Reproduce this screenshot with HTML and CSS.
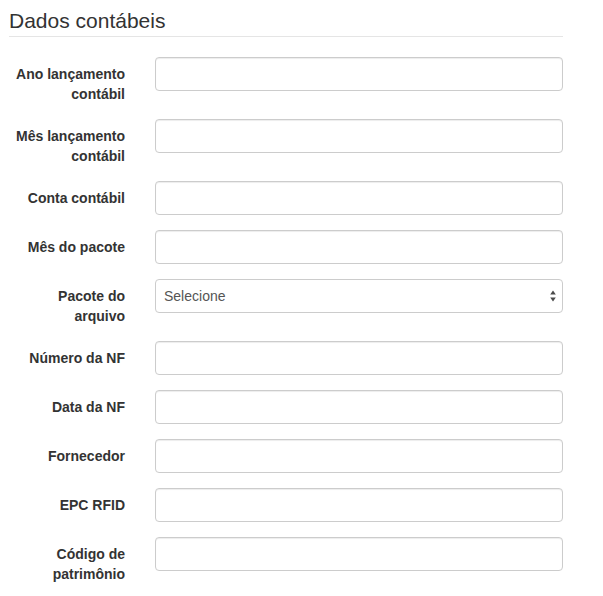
FILE: index.html
```html
<!DOCTYPE html>
<html lang="pt-BR">
<head>
<meta charset="utf-8">
<title>Dados contábeis</title>
<link rel="stylesheet" href="styles.css">
</head>
<body>
<form class="form">
  <fieldset class="fieldset">
    <legend class="legend">Dados contábeis</legend>
    <div class="group">
      <label class="label" for="f1">Ano lançamento contábil</label>
      <div class="field"><input class="control" id="f1" type="text"></div>
    </div>
    <div class="group">
      <label class="label" for="f2">Mês lançamento contábil</label>
      <div class="field"><input class="control" id="f2" type="text"></div>
    </div>
    <div class="group">
      <label class="label" for="f3">Conta contábil</label>
      <div class="field"><input class="control" id="f3" type="text"></div>
    </div>
    <div class="group">
      <label class="label" for="f4">Mês do pacote</label>
      <div class="field"><input class="control" id="f4" type="text"></div>
    </div>
    <div class="group">
      <label class="label" for="f5">Pacote do arquivo</label>
      <div class="field select-wrap">
        <select class="control select" id="f5"><option>Selecione</option></select>
        <svg class="select-arrows" width="6" height="12" viewBox="0 0 6 12" aria-hidden="true">
          <path d="M0.2 4.6 L3 0.6 L5.8 4.6 Z" fill="#4a4a4a"/>
          <path d="M0.2 7.4 L3 11.4 L5.8 7.4 Z" fill="#4a4a4a"/>
        </svg>
      </div>
    </div>
    <div class="group">
      <label class="label" for="f6">Número da NF</label>
      <div class="field"><input class="control" id="f6" type="text"></div>
    </div>
    <div class="group">
      <label class="label" for="f7">Data da NF</label>
      <div class="field"><input class="control" id="f7" type="text"></div>
    </div>
    <div class="group">
      <label class="label" for="f8">Fornecedor</label>
      <div class="field"><input class="control" id="f8" type="text"></div>
    </div>
    <div class="group">
      <label class="label" for="f9">EPC RFID</label>
      <div class="field"><input class="control" id="f9" type="text"></div>
    </div>
    <div class="group">
      <label class="label" for="f10">Código de patrimônio</label>
      <div class="field"><input class="control" id="f10" type="text"></div>
    </div>
  </fieldset>
</form>
</body>
</html>
```
FILE: styles.css
```css
* { box-sizing: border-box; }
html, body {
  margin: 0;
  padding: 0;
  background: #fff;
}
body {
  font-family: "Liberation Sans", Arial, Helvetica, sans-serif;
  font-size: 14px;
  line-height: 20px;
  color: #333;
}
.form {
  width: 563px;
  padding: 6px 0 0 9px;
}
.fieldset {
  margin: 0;
  padding: 0;
  border: 0;
  min-width: 0;
}
.legend {
  display: block;
  width: 100%;
  padding: 0;
  margin: 0 0 20px 0;
  font-size: 21px;
  line-height: 30px;
  color: #333;
  border-bottom: 1px solid #e5e5e5;
  height: 31px;
}
.group {
  display: flex;
  margin-bottom: 15px;
}
.label {
  flex: 0 0 131px;
  padding: 7px 15px 0 4px;
  text-align: right;
  font-weight: bold;
  line-height: 20px;
}
.field {
  flex: 1 1 auto;
  padding-left: 15px;
}
.control {
  display: block;
  width: 100%;
  height: 34px;
  padding: 6px 12px;
  font-family: inherit;
  font-size: 14px;
  line-height: 20px;
  color: #555;
  background: #fff;
  border: 1px solid #ccc;
  border-radius: 4px;
  box-shadow: inset 0 1px 1px rgba(0,0,0,.075);
  outline: none;
  margin: 0;
}
.select-wrap {
  position: relative;
}
.select {
  -webkit-appearance: none;
  appearance: none;
  padding: 6px 20px 6px 8px;
  box-shadow: none;
}
.select-arrows {
  position: absolute;
  right: 7px;
  top: 11px;
  pointer-events: none;
}
```
